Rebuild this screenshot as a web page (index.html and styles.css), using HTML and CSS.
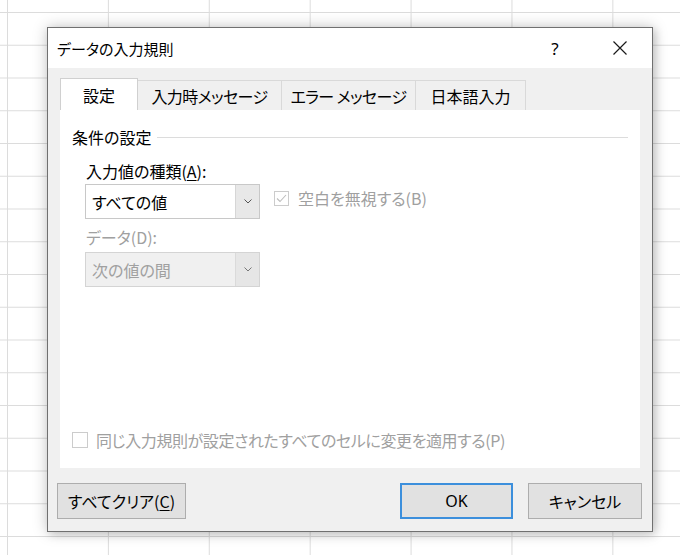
FILE: index.html
```html
<!DOCTYPE html>
<html lang="ja">
<head>
<meta charset="utf-8">
<title>データの入力規則</title>
<link rel="stylesheet" href="styles.css">
</head>
<body>
<div class="dialog">
  <div class="titlebar">
    <span class="title">データの入力規則</span>
    <span class="help">?</span>
    <span class="close"><svg width="14" height="14" viewBox="0 0 14 14"><path d="M0.5 0.5 L13.5 13.5 M13.5 0.5 L0.5 13.5" stroke="#1a1a1a" stroke-width="1.2" fill="none"/></svg></span>
  </div>
  <div class="body">
    <div class="tabs">
      <div class="tab active t1">設定</div>
      <div class="tab t2">入力時メッセージ</div>
      <div class="tab t3">エラー メッセージ</div>
      <div class="tab t4">日本語入力</div>
    </div>
    <div class="panel">
      <div class="group-head"><span>条件の設定</span><span class="rule"></span></div>
      <div class="fields">
        <div class="label">入力値の種類(<u>A</u>):</div>
        <div class="row">
          <div class="select">
            <span class="value">すべての値</span>
            <span class="drop"><svg width="8" height="5" viewBox="0 0 8 5"><polyline points="0.5,0.5 4,4 7.5,0.5" stroke="#555" stroke-width="1" fill="none"/></svg></span>
          </div>
          <div class="check disabled check-top">
            <span class="box"><svg width="11" height="9" viewBox="0 0 11 9"><polyline points="1,4.5 4,7.5 10,1" stroke="#bdbdbd" stroke-width="1.1" fill="none"/></svg></span>
            <span>空白を無視する(B)</span>
          </div>
        </div>
        <div class="label disabled label2">データ(D):</div>
        <div class="select disabled-select">
          <span class="value">次の値の間</span>
          <span class="drop"><svg width="8" height="5" viewBox="0 0 8 5"><polyline points="0.5,0.5 4,4 7.5,0.5" stroke="#777" stroke-width="1" fill="none"/></svg></span>
        </div>
      </div>
      <div class="check disabled check-bottom">
        <span class="box"></span>
        <span class="tight">同じ入力規則が設定されたすべてのセルに変更を適用する(P)</span>
      </div>
    </div>
    <div class="buttons">
      <button class="btn clear">すべてクリア(<u>C</u>)</button>
      <span class="grow"></span>
      <button class="btn ok">OK</button>
      <button class="btn cancel">キャンセル</button>
    </div>
  </div>
</div>
</body>
</html>
```
FILE: styles.css
```css
* { box-sizing: border-box; }
html, body { margin: 0; }
body {
  width: 680px;
  height: 555px;
  overflow: hidden;
  padding: 27px 0 0 47px;
  background-color: #fff;
  background-image:
    linear-gradient(to right, #dcdcdc 1px, transparent 1px),
    linear-gradient(to bottom, #dcdcdc 1px, transparent 1px);
  background-size: 100.9px 100%, 100% 32.75px;
  background-position: 7px 0, 0 12px;
  font-family: "Noto Sans CJK JP", "Noto Sans", sans-serif;
  font-feature-settings: "palt";
  color: #000;
}
.dialog {
  width: 606px;
  height: 505px;
  border: 1px solid #707070;
  background: #f0f0f0;
  box-shadow: 0 0 14px rgba(0,0,0,0.22), 3px 3px 8px rgba(0,0,0,0.12);
  display: flex;
  flex-direction: column;
}
.titlebar {
  height: 40px;
  background: #fff;
  display: flex;
  align-items: center;
  padding: 0 17px 0 9px;
}
.title {
  font-size: 15px;
  flex: 1;
}
.help {
  width: 30px;
  text-align: center;
  font-family: "Noto Sans", sans-serif;
  font-size: 17px;
  margin-right: 2px;
}
.close {
  width: 30px;
  margin-left: 33px;
  display: flex;
  justify-content: center;
  align-items: center;
}
.body {
  flex: 1;
  display: flex;
  flex-direction: column;
  padding: 10px 0 11px 0;
}
.tabs {
  display: flex;
  align-items: flex-end;
  height: 32px;
  margin-left: 12px;
}
.tab {
  height: 30px;
  border: 1px solid #d9d9d9;
  border-bottom: none;
  background: #f0f0f0;
  font-size: 16px;
  letter-spacing: -0.6px;
  display: flex;
  align-items: center;
  justify-content: center;
  margin-left: -1px;
}
.tab.active {
  height: 32px;
  background: #fff;
  margin-left: 0;
  border-color: #d0d0d0;
  letter-spacing: 0;
  position: relative;
  z-index: 1;
}
.t1 { width: 78px; }
.t2 { width: 145px; }
.t3 { width: 135px; }
.t4 { width: 111px; letter-spacing: 0; }
.panel {
  height: 358px;
  width: 580px;
  margin-left: 12px;
  background: #fff;
  display: flex;
  flex-direction: column;
  padding: 17px 12px 18px 12px;
}
.group-head {
  display: flex;
  align-items: center;
  height: 20px;
  font-size: 16px;
}
.rule {
  flex: 1;
  height: 1px;
  background: #dcdcdc;
  margin-left: 6px;
}
.fields {
  margin: 14px 0 0 13px;
  display: flex;
  flex-direction: column;
  align-items: flex-start;
}
.label {
  font-size: 16px;
  line-height: 20px;
  padding-left: 1px;
}
.label u { text-underline-offset: 2px; }
.disabled { color: #a0a0a0; }
.row {
  display: flex;
  align-items: flex-start;
  margin-top: 3px;
}
.select {
  width: 175px;
  height: 35px;
  border: 1px solid #c8c8c8;
  background: #fff;
  display: flex;
  font-size: 16px;
}
.select .value {
  flex: 1;
  display: flex;
  align-items: center;
  padding-left: 6px;
}
.select .drop {
  width: 24px;
  background: #e8e8e8;
  border-left: 1px solid #d6d6d6;
  display: flex;
  align-items: center;
  justify-content: center;
}
.label2 { margin-top: 8px; }
.disabled-select {
  margin-top: 5px;
  background: #f0f0f0;
  border-color: #d4d4d4;
  color: #a0a0a0;
}
.disabled-select .drop { background: #e6e6e6; border-left-color: #dadada; }
.check {
  display: flex;
  align-items: center;
  font-size: 16px;
}
.box {
  width: 15px;
  height: 15px;
  border: 1px solid #cccccc;
  background: #fff;
  display: flex;
  align-items: center;
  justify-content: center;
}
.check-top {
  margin: 2px 0 0 14px;
  gap: 9px;
}
.check-bottom {
  margin-top: auto;
  height: 20px;
  gap: 8px;
}
.check-bottom .box { width: 16px; height: 16px; }
.tight { letter-spacing: -0.4px; }
.buttons {
  display: flex;
  margin-top: 15px;
  padding: 0 10px 0 9px;
  gap: 15px;
  height: 36px;
}
.grow { flex: 1; }
.btn {
  font: inherit;
  font-size: 16px;
  color: #000;
  background: #e1e1e1;
  border: 1px solid #adadad;
  height: 36px;
  padding: 0;
  margin: 0;
}
.btn u { text-underline-offset: 2px; }
.clear { width: 129px; }
.ok {
  width: 113px;
  border: 2px solid #3c8fdc;
  font-family: "Noto Sans", sans-serif;
}
.cancel { width: 114px; }
```
